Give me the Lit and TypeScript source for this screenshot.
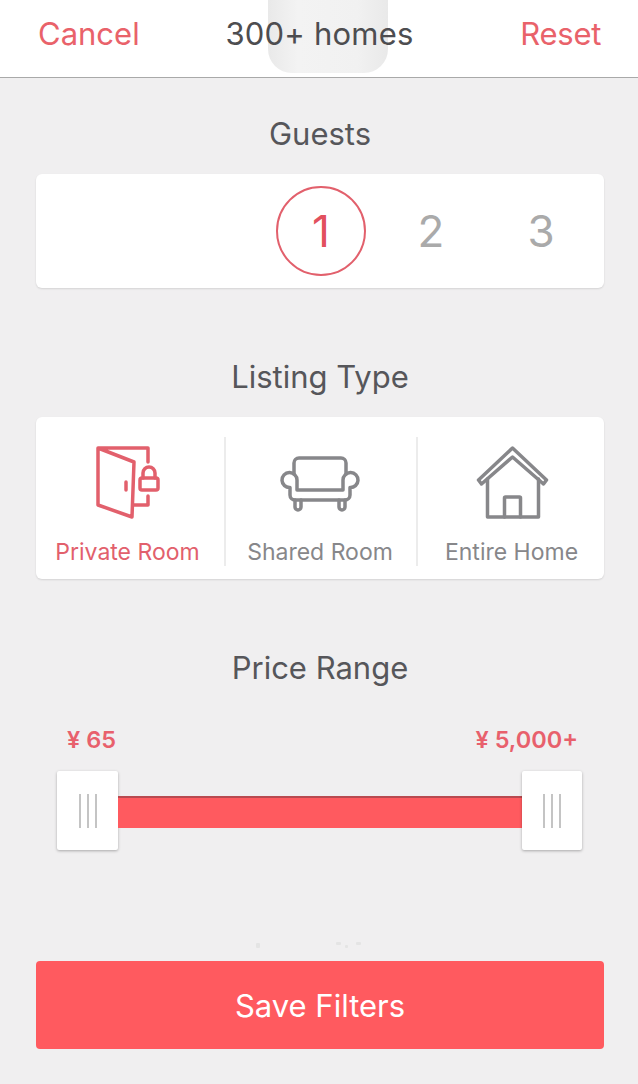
import { LitElement, css, html, svg } from "lit";
import { customElement, state } from "lit/decorators.js";

const doorIcon = svg`
  <path d="M20 11 L56 25 L54 80 L20 68 Z M20 11 H70 V25 M70 59 V68 H56" />
  <path d="M48 45 V53" />
  <rect x="62" y="41" width="18" height="12" rx="2" />
  <path d="M65 41 V36 a6 6 0 0 1 12 0 V41" />
`;

const couchIcon = svg`
  <path d="M24 37 V26 a5 5 0 0 1 5 -5 H71 a5 5 0 0 1 5 5 V37" />
  <path d="M27 53 V43 A7.5 7.5 0 1 0 20 50.5 V58 a5 5 0 0 0 5 5 H75 a5 5 0 0 0 5 -5 V50.5 A7.5 7.5 0 1 0 73 43 V53 H27" />
  <path d="M25 63 V70 a3 3 0 0 0 6 0 V63 M69 63 V70 a3 3 0 0 0 6 0 V63" />
`;

const houseIcon = svg`
  <path d="M50.5 11 L84.5 43 L81.5 47 L50.5 20 L19.5 47 L16.5 43 Z" />
  <path d="M25.5 42 V80 H76.5 V42" />
  <path d="M42.5 80 V61 a1 1 0 0 1 1 -1 H57.5 a1 1 0 0 1 1 1 V80" />
`;

@customElement("app-root")
export class AppRoot extends LitElement {
  @state() guests = 1;
  @state() listing = "Private Room";

  private listingTypes = [
    { label: "Private Room", icon: doorIcon },
    { label: "Shared Room", icon: couchIcon },
    { label: "Entire Home", icon: houseIcon },
  ];

  render() {
    return html`
      <header>
        <div class="tab"></div>
        <span class="action">Cancel</span>
        <span class="count">300+ homes</span>
        <span class="action reset">Reset</span>
      </header>
      <main>
        <h2>Guests</h2>
        <section class="card guests">
          ${[1, 2, 3].map(
            (n) => html`<div class="guest ${n === this.guests ? "on" : ""}"><span>${n}</span></div>`
          )}
        </section>

        <h2 class="gap">Listing Type</h2>
        <section class="card listing">
          ${this.listingTypes.map(
            (t) => html`
              <div class="type ${t.label === this.listing ? "on" : ""}">
                <svg viewBox="0 0 100 100">${t.icon}</svg>
                <span>${t.label}</span>
              </div>
            `
          )}
        </section>

        <h2 class="gap">Price Range</h2>
        <div class="prices">
          <span>¥ 65</span>
          <span>¥ 5,000+</span>
        </div>
        <div class="slider">
          <div class="thumb"><i></i><i></i><i></i></div>
          <div class="track"></div>
          <div class="thumb"><i></i><i></i><i></i></div>
        </div>

        <button>Save Filters</button>
      </main>
      <div class="speck" style="left:256px;top:943px;width:4px;height:5px"></div>
      <div class="speck" style="left:336px;top:942px;width:5px;height:3px"></div>
      <div class="speck" style="left:345px;top:945px;width:3px;height:3px"></div>
      <div class="speck" style="left:356px;top:942px;width:5px;height:3px"></div>
    `;
  }

  static styles = css`
    :host {
      display: block;
      position: relative;
      width: 638px;
      height: 1084px;
      overflow: hidden;
      background: #f0eff0;
      font-family: "Inter", "Liberation Sans", sans-serif;
      color: #56565a;
    }
    header {
      position: relative;
      box-sizing: border-box;
      height: 78px;
      padding: 0 37px 10px 38px;
      display: grid;
      grid-template-columns: 1fr auto 1fr;
      align-items: center;
      background: #fff;
      border-bottom: 1px solid #a9a9a9;
      font-size: 31px;
    }
    header span {
      position: relative;
    }
    .tab {
      position: absolute;
      left: 268px;
      top: 0;
      width: 120px;
      height: 73px;
      border-radius: 0 0 24px 24px;
      background: linear-gradient(90deg, #e9e9e9, #f3f3f3 25%, #f1f1f1 75%, #e9e9e9);
    }
    .action {
      color: #e9626a;
    }
    .reset {
      justify-self: end;
      letter-spacing: -0.3px;
    }
    .count {
      color: #4d4d50;
      letter-spacing: 0.2px;
    }
    main {
      padding: 35px 34px 0 36px;
    }
    h2 {
      margin: 0;
      font-size: 31px;
      line-height: 42px;
      font-weight: 400;
      text-align: center;
    }
    h2.gap {
      margin-top: 68px;
    }
    .card {
      background: #fff;
      border-radius: 6px;
      box-shadow: 0 1px 2px rgba(0, 0, 0, 0.12);
    }
    .guests {
      margin-top: 19px;
      height: 114px;
      box-sizing: border-box;
      padding-right: 8px;
      display: flex;
      align-items: center;
      justify-content: flex-end;
    }
    .guest {
      width: 110px;
      display: flex;
      justify-content: center;
      font-size: 44px;
      color: #aaa;
    }
    .guest span {
      box-sizing: border-box;
      width: 90px;
      height: 90px;
      border-radius: 50%;
      border: 1px solid transparent;
      display: flex;
      align-items: center;
      justify-content: center;
    }
    .guest.on span {
      border: 2px solid #e2606c;
      color: #e2505e;
    }
    .listing {
      margin-top: 19px;
      height: 162px;
      display: grid;
      grid-template-columns: 190px 192px 186px;
      padding: 20px 0 14px;
      box-sizing: border-box;
    }
    .type {
      display: flex;
      flex-direction: column;
      align-items: center;
      color: #87878a;
      font-size: 23px;
      border-right: 2px solid #ececec;
      padding-right: 2px;
    }
    .type:first-child {
      padding-right: 5px;
    }
    .type:last-child {
      border-right: 0;
      padding: 0 0 0 1px;
    }
    .type svg {
      width: 100px;
      height: 100px;
      flex: none;
      fill: none;
      stroke: currentColor;
      stroke-width: 3.5;
      stroke-linejoin: round;
      stroke-linecap: round;
    }
    .type span {
      margin-top: 1px;
    }
    .type.on {
      color: #e2606c;
    }
    .prices {
      margin-top: 36px;
      padding: 0 26px 0 31px;
      display: flex;
      justify-content: space-between;
      color: #e8606c;
      font-size: 23.5px;
      line-height: 30px;
      font-weight: 600;
    }
    .slider {
      margin: 16px 22px 0 21px;
      display: flex;
      align-items: flex-start;
    }
    .thumb {
      flex: none;
      box-sizing: border-box;
      width: 61px;
      height: 79px;
      background: #fff;
      border-radius: 2px;
      box-shadow: 0 1px 3px rgba(0, 0, 0, 0.3);
      display: flex;
      align-items: center;
      justify-content: center;
      gap: 6px;
    }
    .thumb:last-child {
      width: 60px;
    }
    .thumb i {
      width: 2px;
      height: 34px;
      background: #c4c4c4;
    }
    .track {
      flex: 1;
      height: 32px;
      margin-top: 25px;
      background: #ff5a5f;
      border-top: 2px solid #b84a50;
      box-sizing: border-box;
    }
    button {
      display: block;
      width: 568px;
      height: 88px;
      margin-top: 111px;
      border: 0;
      border-radius: 4px;
      background: #ff5a5f;
      color: #fff;
      font: inherit;
      font-size: 31px;
    }
    .speck {
      position: absolute;
      background: #e4e4e4;
      border-radius: 1px;
    }
  `;
}
